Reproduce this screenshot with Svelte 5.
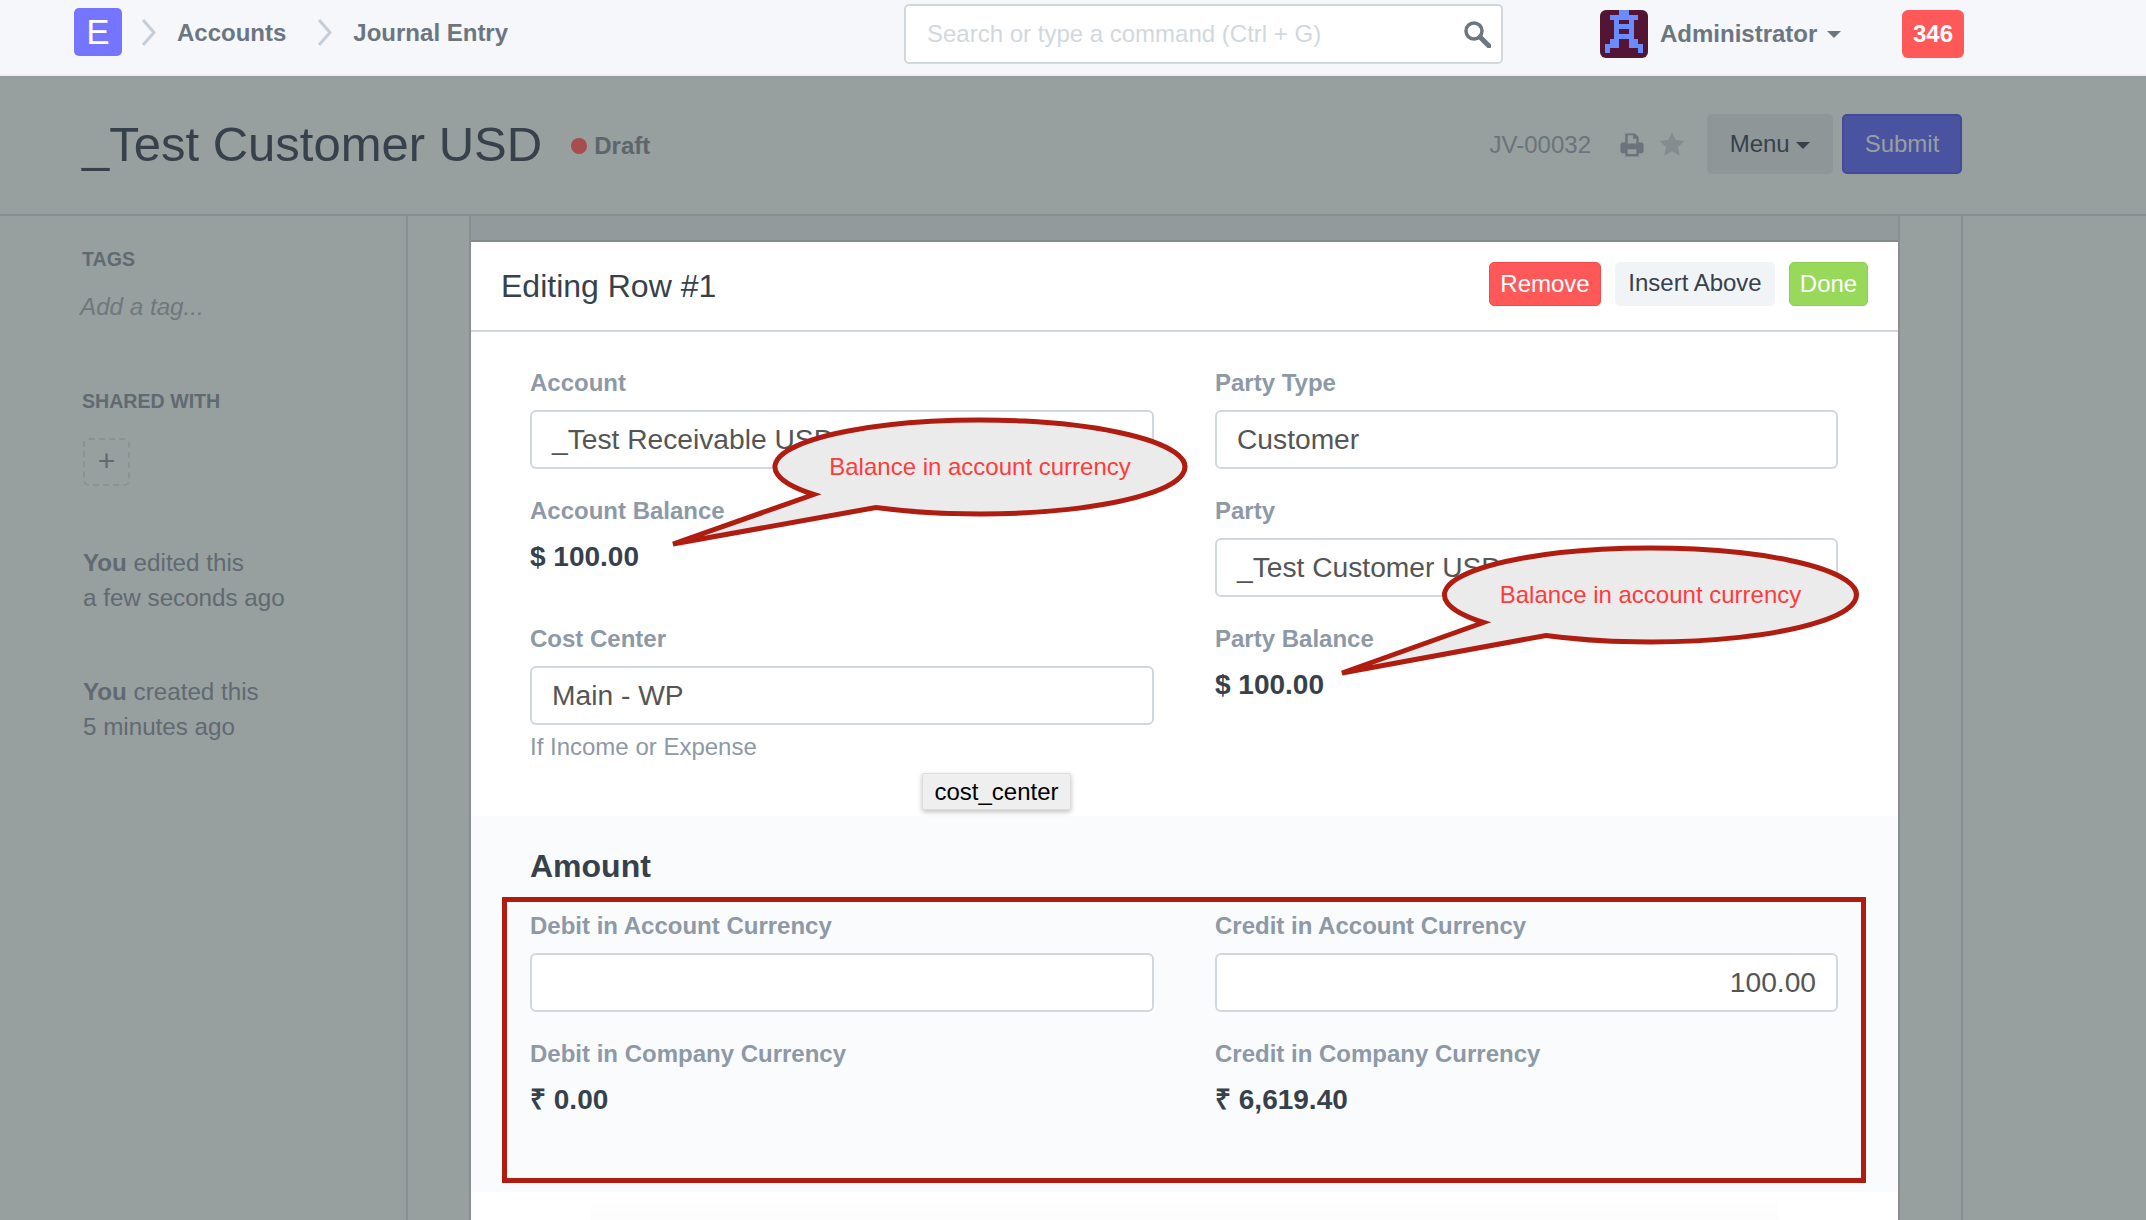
<script lang="ts">
  const leftFields = [
    { label: 'Account', input: '_Test Receivable USD' },
    { label: 'Account Balance', value: '$ 100.00' },
    { label: 'Cost Center', input: 'Main - WP', help: 'If Income or Expense' }
  ]
  const rightFields = [
    { label: 'Party Type', input: 'Customer' },
    { label: 'Party', input: '_Test Customer USD' },
    { label: 'Party Balance', value: '$ 100.00' }
  ]
  const amountFields = [
    { label: 'Debit in Account Currency', input: '' },
    { label: 'Credit in Account Currency', input: '100.00', right: true },
    { label: 'Debit in Company Currency', value: '₹ 0.00' },
    { label: 'Credit in Company Currency', value: '₹ 6,619.40' }
  ]
  // annotation bubbles drawn on top of the screenshot
  const callouts = [
    { cx: 980, cy: 467, rx: 205, ry: 47, tip: [673, 544] },
    { cx: 1650.5, cy: 595, rx: 206, ry: 47, tip: [1342, 673] }
  ]
  function bubble(c: any) {
    const x1 = c.cx - c.rx * 0.811, y1 = c.cy + c.ry * 0.585
    const x2 = c.cx - c.rx * 0.508, y2 = c.cy + c.ry * 0.861
    return `M${c.tip[0]} ${c.tip[1]} L${x1} ${y1} A${c.rx} ${c.ry} 0 1 1 ${x2} ${y2} Z`
  }
</script>

{#snippet field(f: any)}
  <div class="field">
    <div class="label">{f.label}</div>
    {#if f.value}
      <div class="value">{f.value}</div>
    {:else}
      <div class="input" class:right={f.right}>{f.input}</div>
    {/if}
    {#if f.help}<div class="help">{f.help}</div>{/if}
  </div>
{/snippet}

<div class="page">
  <header class="navbar">
    <div class="logo">E</div>
    <svg class="chev" viewBox="0 0 16 27"><path d="M2 1l11 12.5L2 26" /></svg>
    <span class="crumb">Accounts</span>
    <svg class="chev" viewBox="0 0 16 27"><path d="M2 1l11 12.5L2 26" /></svg>
    <span class="crumb">Journal Entry</span>

    <div class="search">
      <span>Search or type a command (Ctrl + G)</span>
      <svg viewBox="0 0 28 28" width="28" height="28"><circle cx="11" cy="11" r="8" /><path d="M17 17l9 9" class="handle" /></svg>
    </div>

    <div class="avatar">
      <svg viewBox="0 0 10 10" width="48" height="48" shape-rendering="crispEdges">
        <rect width="10" height="10" fill="#541535" />
        <path fill="#6b8cff" fill-rule="evenodd" d="M4 0h2v1h2v1H7v4h1v1h1v2H8V8H6V6H4v2H2v1H1V7h1V6h1V2H2V1h2zM4 2v1h2V2zM4 4v1h2V4z" />
      </svg>
    </div>
    <span class="user">Administrator</span>
    <span class="caret"></span>
    <div class="badge">346</div>
  </header>

  <div class="titlebar">
    <h1>_Test Customer USD</h1>
    <span class="dot"></span>
    <span class="status">Draft</span>
    <span class="docname">JV-00032</span>
    <svg class="print" viewBox="0 0 26 26" width="26" height="25">
      <path d="M6 11V1.5h10l4 4V11h3a2 2 0 0 1 2 2v7a2 2 0 0 1-2 2h-3v3.5H6V22H3a2 2 0 0 1-2-2v-7a2 2 0 0 1 2-2zM8.5 3.5V12h9V7h-3.5V3.5zM8.5 18v5h9v-5z" fill-rule="evenodd" />
    </svg>
    <svg class="star" viewBox="0 0 26 26" width="26" height="26">
      <path d="M13 1l3.7 8 8.8 1-6.5 6 1.8 8.7L13 20.2l-7.8 4.5L7 16 .5 10l8.8-1z" />
    </svg>
    <div class="btn-menu">Menu <span class="caret dark"></span></div>
    <div class="btn-submit">Submit</div>
  </div>

  <div class="body">
    <aside class="sidebar">
      <div class="side-head">TAGS</div>
      <div class="add-tag">Add a tag...</div>
      <div class="side-head shared">SHARED WITH</div>
      <div class="add-user">+</div>
      <div class="activity"><b>You</b> edited this<br />a few seconds ago</div>
      <div class="activity"><b>You</b> created this<br />5 minutes ago</div>
    </aside>

    <main class="main">
      <section class="card">
        <div class="card-head">
          <h2>Editing Row #1</h2>
          <div class="actions">
            <div class="btn remove">Remove</div>
            <div class="btn insert">Insert Above</div>
            <div class="btn done">Done</div>
          </div>
        </div>
        <div class="fields">
          <div class="col">{#each leftFields as f}{@render field(f)}{/each}</div>
          <div class="col">{#each rightFields as f}{@render field(f)}{/each}</div>
        </div>
        <div class="amount">
          <h3>Amount</h3>
          <div class="amount-grid">
            {#each amountFields as f}{@render field(f)}{/each}
          </div>
        </div>
        <div class="fade"></div>
      </section>
    </main>
    <div class="gutter"></div>
  </div>

  <div class="tooltip">cost_center</div>

  <svg class="notes" viewBox="0 0 2146 1220" width="2146" height="1220">
    {#each callouts as c}
      <path class="bubble" d={bubble(c)} />
      <text x={c.cx} y={c.cy + 8} text-anchor="middle">Balance in account currency</text>
    {/each}
    <rect class="frame" x="504.5" y="899.5" width="1359" height="281" />
  </svg>
</div>

<style>
  :global(body) { margin: 0; background: #989f9f; overflow: hidden; }
  .page {
    position: relative; width: 2146px; height: 1220px; overflow: hidden;
    font-family: "Liberation Sans", Arial, sans-serif; color: #36414c;
    background: #989f9f;
  }

  .navbar {
    display: flex; align-items: center; height: 64px; padding: 0 0 10px 74px;
    background: #f5f7fb; border-bottom: 2px solid #eef0f4;
  }
  .logo {
    width: 48px; height: 48px; border-radius: 5px; background: #7575ff; color: #fff;
    font-size: 35px; line-height: 48px; text-align: center;
  }
  .chev { width: 16px; height: 27px; margin: 0 20px 0 19px; flex-shrink: 0; }
  .chev path { fill: none; stroke: #c5ced6; stroke-width: 3; }
  .crumb { font-size: 24px; font-weight: 700; color: #6c7680; margin: 2px 31px 0 0; }
  .crumb + .chev { margin-left: 0; }
  .search {
    position: absolute; left: 904px; top: 4px; width: 599px; height: 60px; box-sizing: border-box;
    display: flex; align-items: center; justify-content: space-between; padding: 0 10px 0 21px;
    background: #fff; border: 2px solid #d1d8dd; border-radius: 5px;
    font-size: 24px; color: #d1d8dd;
  }
  .search svg { fill: none; stroke: #6c7680; stroke-width: 3.5; }
  .search .handle { stroke-width: 5; stroke-linecap: round; }
  .avatar { position: absolute; left: 1600px; top: 10px; width: 48px; height: 48px; border-radius: 6px; overflow: hidden; }
  .avatar svg { display: block; }
  .user { position: absolute; left: 1660px; top: 20px; font-size: 24px; font-weight: 700; color: #6c7680; }
  .caret {
    position: absolute; left: 1827px; top: 31px;
    border: 7.5px solid transparent; border-top-color: #6c7680; border-bottom: 0;
  }
  .caret.dark { position: static; display: inline-block; vertical-align: middle; border-top-color: #36414c; }
  .badge {
    position: absolute; left: 1902px; top: 10px; width: 62px; height: 48px; border-radius: 6px;
    background: #ff5858; color: #fff; font-size: 24px; font-weight: 700; line-height: 48px; text-align: center;
  }

  .titlebar {
    display: flex; align-items: center; height: 136px; padding: 0 184px 2px 82px;
    border-bottom: 2px solid #878f90;
  }
  h1 { margin: 0; font-size: 49px; font-weight: 400; color: #36414c; }
  .dot { width: 16px; height: 16px; border-radius: 50%; background: #a64d50; margin: 4px 7px 0 29px; }
  .status { font-size: 24px; font-weight: 700; color: #5d666d; margin-top: 4px; }
  .docname { margin-left: auto; margin-top: 2px; font-size: 24px; color: #6b747b; }
  .print { fill: #6b747b; margin-left: 28px; }
  .star { fill: #838c8f; margin: 0 22px 0 14px; }
  .btn-menu {
    width: 126px; height: 60px; box-sizing: border-box; border-radius: 5px; background: #8f9697;
    font-size: 24px; color: #36414c; line-height: 60px; text-align: center;
  }
  .btn-submit {
    width: 120px; height: 60px; box-sizing: border-box; margin-left: 9px; border-radius: 5px;
    background: #4a539f; border: 2px solid #424b97; color: #989fa3; font-size: 24px; line-height: 56px; text-align: center;
  }

  .body { display: flex; height: 1004px; }
  .sidebar {
    width: 323px; flex-shrink: 0; padding: 30px 0 0 83px;
    border-right: 2px solid #878f90; font-size: 24.2px; color: #5f6a72;
  }
  .side-head { font-size: 19.6px; font-weight: 700; line-height: 26px; margin-left: -1px; }
  .side-head.shared { margin-top: 66px; }
  .add-tag { font-style: italic; margin: 20px 0 0 -3px; line-height: 30px; color: #6f787c; }
  .add-user {
    width: 47px; height: 48px; box-sizing: border-box; margin-top: 24px; border: 2px dashed #8a9294; border-radius: 6px;
    font-size: 30px; line-height: 41px; text-align: center;
  }
  .activity { margin-top: 60px; line-height: 34.5px; }
  .activity + .activity { margin-top: 60px; }

  .main {
    flex: none; width: 1431px; box-sizing: border-box; margin-left: 61px; padding-top: 24px;
    background: #939a9b; border: solid #878f90; border-width: 0 2px;
  }
  .card {
    height: 980px; background: #fff; border-top: 2px solid #838b8c;
  }
  .card-head {
    display: flex; align-items: center; justify-content: space-between; height: 88px; padding: 0 30px;
    border-bottom: 2px solid #d1d8dd;
  }
  h2 { margin: 0; font-size: 32px; font-weight: 400; color: #36414c; }
  .actions { display: flex; gap: 14px; margin-top: -4px; }
  .btn { height: 44px; box-sizing: border-box; border-radius: 5px; font-size: 24px; line-height: 42px; text-align: center; }
  .remove { width: 112px; background: #ff5858; border: 1px solid #f24c4c; color: #fff; }
  .insert { width: 160px; background: #f0f4f7; color: #36414c; }
  .done { width: 79px; background: #98d85b; border: 1px solid #90d050; color: #fff; }

  .fields {
    display: grid; grid-template-columns: 624px 623px; column-gap: 61px; padding: 37px 0 0 59px; height: 484px; box-sizing: border-box;
  }
  .col { display: flex; flex-direction: column; }
  .field { height: 128px; }
  .label { font-size: 24px; font-weight: 700; line-height: 28px; color: #8d99a6; margin-bottom: 13px; }
  .input {
    height: 59px; box-sizing: border-box; padding: 0 20px; background: #fff; border: 2px solid #d1d8dd; border-radius: 6px;
    font-size: 28.2px; line-height: 55px; color: #555;
  }
  .input.right { text-align: right; }
  .value { font-size: 28px; font-weight: 700; line-height: 34px; color: #36414c; margin-top: 15px; }
  .help { font-size: 24px; line-height: 30px; color: #8d99a6; margin-top: 7px; }

  .amount { height: 376px; box-sizing: border-box; padding: 31px 59px 0; background: #f9fbfd; }
  h3 { margin: 0; font-size: 32px; font-weight: 700; line-height: 38px; color: #36414c; }
  .amount-grid { display: grid; grid-template-columns: 624px 623px; column-gap: 61px; margin-top: 27px; }
  .fade { height: 28px; background: linear-gradient(#fff, #fcfcfd); margin: 0 120px; }

  .gutter { margin-left: 61px; border-left: 2px solid #878f90; }

  .tooltip {
    position: absolute; left: 922px; top: 773px; width: 149px; height: 37px; box-sizing: border-box;
    background: #efefef; border: 1px solid #ddd; border-radius: 2px; box-shadow: 0 2px 5px rgba(0,0,0,.25);
    font-size: 24px; line-height: 35px; color: #000; text-align: center;
  }

  .notes { position: absolute; left: 0; top: 0; pointer-events: none; }
  .bubble { fill: #ebebeb; stroke: #b01c10; stroke-width: 5; stroke-linejoin: miter; }
  .notes text { font-size: 24px; fill: #ff3b3b; font-family: "Liberation Sans", Arial, sans-serif; }
  .frame { fill: none; stroke: #b01c10; stroke-width: 5; }
</style>
